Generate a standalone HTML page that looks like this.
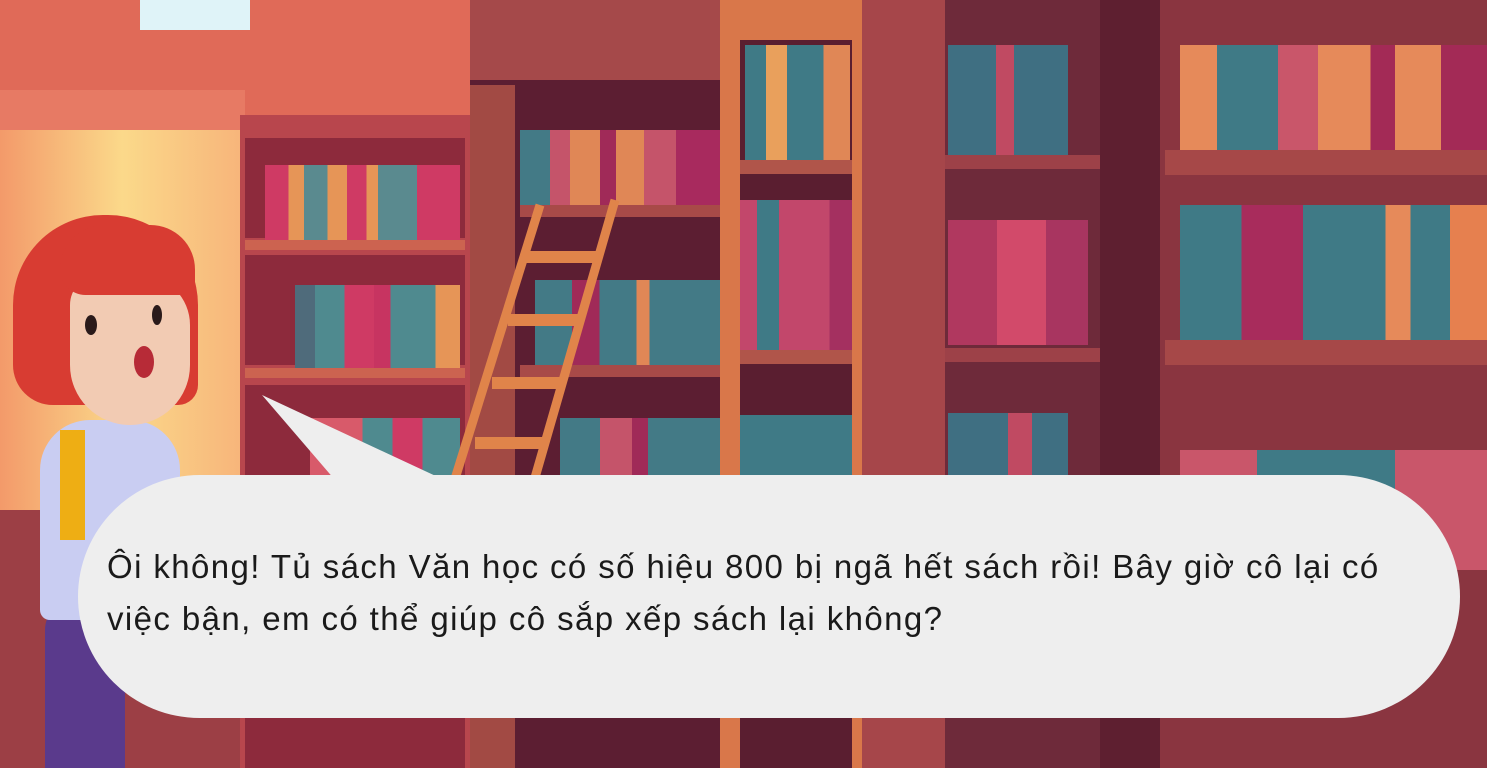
<!DOCTYPE html>
<html><head><meta charset="utf-8"><style>
html,body{margin:0;padding:0}
body{width:1487px;height:768px;position:relative;overflow:hidden;background:#b8474a;font-family:"Liberation Sans",sans-serif}
.a{position:absolute}
</style></head><body>
<div class="a" style="left:0;top:0;width:1487px;height:768px;background:#9c3f45"></div>
<div class="a" style="left:0;top:0;width:470px;height:130px;background:#e06a58"></div>
<div class="a" style="left:140px;top:0;width:110px;height:30px;background:#dff3f8"></div>
<div class="a" style="left:0;top:130px;width:245px;height:380px;background:linear-gradient(90deg,#f39a6a,#fbd98a 50%,#f7b47a)"></div>
<div class="a" style="left:0;top:90px;width:245px;height:40px;background:#e77a64"></div>
<div class="a" style="left:470px;top:0;width:270px;height:110px;background:#a5494a"></div>
<div class="a" style="left:240px;top:115px;width:230px;height:653px;background:#b8464d"></div>
<div class="a" style="left:245px;top:138px;width:220px;height:100px;background:#8d2a3c"></div>
<div class="a" style="left:245px;top:255px;width:220px;height:110px;background:#8d2a3c"></div>
<div class="a" style="left:245px;top:385px;width:220px;height:383px;background:#8d2a3c"></div>
<div class="a" style="left:265px;top:165px;width:195px;height:75px;background:linear-gradient(90deg,#cf3a64 0 12%,#e69557 12% 20%,#5a8a8f 20% 32%,#e69557 32% 42%,#cf3a64 42% 52%,#e69557 52% 58%,#5a8a8f 58% 78%,#cf3a64 78% 100%)"></div>
<div class="a" style="left:295px;top:285px;width:165px;height:85px;background:linear-gradient(90deg,#4f6b7b 0 12%,#4f8a8f 12% 30%,#cf3a64 30% 48%,#c73461 48% 58%,#4f8a8f 58% 85%,#e69557 85% 100%)"></div>
<div class="a" style="left:310px;top:418px;width:150px;height:60px;background:linear-gradient(90deg,#d85a6a 0 35%,#4f8a8f 35% 55%,#cf3a64 55% 75%,#4f8a8f 75%)"></div>
<div class="a" style="left:245px;top:240px;width:220px;height:10px;background:#cc6350"></div>
<div class="a" style="left:245px;top:368px;width:220px;height:10px;background:#cc6350"></div>
<div class="a" style="left:470px;top:80px;width:255px;height:688px;background:#5c1e32"></div>
<div class="a" style="left:520px;top:130px;width:200px;height:75px;background:linear-gradient(90deg,#437a86 0 15%,#c5546a 15% 25%,#e08756 25% 40%,#a02a58 40% 48%,#e08756 48% 62%,#c5546a 62% 78%,#a82a5e 78% 100%)"></div>
<div class="a" style="left:535px;top:280px;width:185px;height:85px;background:linear-gradient(90deg,#437a86 0 20%,#a02a58 20% 35%,#437a86 35% 55%,#e08756 55% 62%,#437a86 62% 100%)"></div>
<div class="a" style="left:560px;top:418px;width:160px;height:60px;background:linear-gradient(90deg,#437a86 0 25%,#c5546a 25% 45%,#a02a58 45% 55%,#437a86 55%)"></div>
<div class="a" style="left:520px;top:205px;width:200px;height:12px;background:#a84a48"></div>
<div class="a" style="left:520px;top:365px;width:200px;height:12px;background:#a84a48"></div>
<div class="a" style="left:470px;top:85px;width:45px;height:683px;background:#a24a44"></div>
<svg class="a" style="left:440px;top:195px" width="200" height="300"><g stroke="#e0844a" stroke-width="9" fill="none"><line x1="100" y1="10" x2="10" y2="300"/><line x1="175" y1="5" x2="90" y2="300"/><g stroke-width="12"><line x1="85" y1="62" x2="160" y2="62"/><line x1="68" y1="125" x2="142" y2="125"/><line x1="52" y1="188" x2="124" y2="188"/><line x1="35" y1="248" x2="106" y2="248"/></g></g></svg>
<div class="a" style="left:720px;top:0;width:145px;height:768px;background:#d9774a"></div>
<div class="a" style="left:740px;top:40px;width:112px;height:728px;background:#5a1e30"></div>
<div class="a" style="left:745px;top:45px;width:105px;height:115px;background:linear-gradient(90deg,#3f7a86 0 20%,#e9a05c 20% 40%,#3f7a86 40% 75%,#e08756 75% 100%)"></div>
<div class="a" style="left:740px;top:200px;width:112px;height:150px;background:linear-gradient(90deg,#c2476b 0 15%,#3f7a86 15% 35%,#c2476b 35% 80%,#a43060 80% 100%)"></div>
<div class="a" style="left:740px;top:415px;width:112px;height:70px;background:#3f7a86"></div>
<div class="a" style="left:740px;top:160px;width:112px;height:14px;background:#b0554a"></div>
<div class="a" style="left:740px;top:350px;width:112px;height:14px;background:#b0554a"></div>
<div class="a" style="left:862px;top:0;width:85px;height:768px;background:#a6464a"></div>
<div class="a" style="left:945px;top:0;width:155px;height:768px;background:#6e2a3a"></div>
<div class="a" style="left:948px;top:45px;width:120px;height:110px;background:linear-gradient(90deg,#3f6f82 0 40%,#c04a62 40% 55%,#3f6f82 55% 100%)"></div>
<div class="a" style="left:948px;top:220px;width:140px;height:125px;background:linear-gradient(90deg,#b0385f 0 35%,#d24a6a 35% 70%,#a83560 70% 100%)"></div>
<div class="a" style="left:948px;top:413px;width:120px;height:70px;background:linear-gradient(90deg,#3f6f82 0 50%,#c04a62 50% 70%,#3f6f82 70%)"></div>
<div class="a" style="left:945px;top:155px;width:155px;height:14px;background:#9d4148"></div>
<div class="a" style="left:945px;top:348px;width:155px;height:14px;background:#9d4148"></div>
<div class="a" style="left:1100px;top:0;width:65px;height:768px;background:#5e1f30"></div>
<div class="a" style="left:1160px;top:0;width:327px;height:768px;background:#8a3540"></div>
<div class="a" style="left:1180px;top:45px;width:307px;height:115px;background:linear-gradient(90deg,#e68a5a 0 12%,#3f7a86 12% 32%,#c9566a 32% 45%,#e68a5a 45% 62%,#a32a56 62% 70%,#e68a5a 70% 85%,#a32a56 85% 100%)"></div>
<div class="a" style="left:1180px;top:205px;width:307px;height:140px;background:linear-gradient(90deg,#3f7a86 0 20%,#a82c5c 20% 40%,#3f7a86 40% 67%,#e68a5a 67% 75%,#3f7a86 75% 88%,#e6804f 88% 100%)"></div>
<div class="a" style="left:1180px;top:450px;width:307px;height:120px;background:linear-gradient(90deg,#c9566a 0 25%,#3f7a86 25% 70%,#c9566a 70% 100%)"></div>
<div class="a" style="left:1165px;top:150px;width:322px;height:25px;background:#a64848"></div>
<div class="a" style="left:1165px;top:340px;width:322px;height:25px;background:#a64848"></div>
<div class="a" style="left:45px;top:600px;width:80px;height:168px;background:#5a3a8c;border-radius:30px 30px 0 0"></div>
<div class="a" style="left:40px;top:420px;width:140px;height:200px;background:#c9cdf2;border-radius:50px 50px 10px 10px"></div>
<div class="a" style="left:60px;top:430px;width:25px;height:110px;background:#eeae14"></div>
<div class="a" style="left:13px;top:215px;width:185px;height:190px;background:#d83c32;border-radius:90px 90px 20px 40px"></div>
<div class="a" style="left:70px;top:275px;width:120px;height:150px;background:#f2cbb3;border-radius:30px 50px 60px 60px"></div>
<div class="a" style="left:85px;top:315px;width:12px;height:20px;background:#2a1a1a;border-radius:50%"></div>
<div class="a" style="left:152px;top:305px;width:10px;height:20px;background:#2a1a1a;border-radius:50%"></div>
<div class="a" style="left:134px;top:346px;width:20px;height:32px;background:#b72b37;border-radius:50%"></div>
<div class="a" style="left:60px;top:225px;width:135px;height:70px;background:#d83c32;border-radius:70px 70px 10px 40px"></div>
<svg class="a" style="left:0;top:0" width="1487" height="768"><polygon points="262,395 440,478 335,480" fill="#eeeeee"/></svg>
<div class="a" style="left:78px;top:475px;width:1382px;height:243px;background:#eeeeee;border-radius:122px"></div>
<div class="a" style="left:107px;top:541px;width:1320px;font-size:33px;letter-spacing:1.4px;line-height:52px;color:#1a1a1a">Ôi không! Tủ sách Văn học có số hiệu 800 bị ngã hết sách rồi! Bây giờ cô lại có việc bận, em có thể giúp cô sắp xếp sách lại không?</div>
</body></html>
